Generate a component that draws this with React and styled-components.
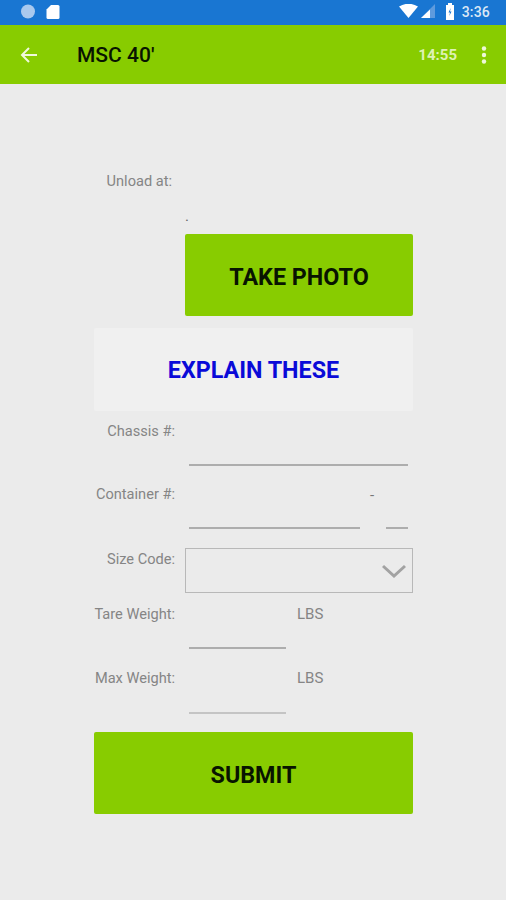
import React from 'react';
import styled, { createGlobalStyle } from 'styled-components';

const Global = createGlobalStyle`
  html, body { margin: 0; padding: 0; background: #ebebeb; }
  body { font-family: Roboto, "Liberation Sans", sans-serif; }
`;
const Screen = styled.div`
  width: 506px; height: 900px; background: #ebebeb; overflow: hidden;
  display: flex; flex-direction: column;
`;
const StatusBar = styled.div`
  height: 25px; background: #1976d2; display: flex; align-items: center;
  padding: 0 16px 2px 20px; box-sizing: border-box; color: #fff;
`;
const StatusLeft = styled.div`display: flex; align-items: center; gap: 11px; flex: 1;`;
const StatusRight = styled.div`display: flex; align-items: center;`;
const Clock = styled.span`
  font-size: 14px; font-weight: 500; color: #dbe8f6; margin-left: 7px; letter-spacing: .2px;
`;
const AppBar = styled.header`
  height: 59px; background: #88cc00; display: flex; align-items: center; box-sizing: border-box;
  padding: 0 19px 0 20px;
`;
const Back = styled.svg`width: 18px; height: 18px; display: block;`;
const Title = styled.h1`
  margin: 2px 0 0 39px; flex: 1; font-size: 21px; font-weight: 500; color: #081400; line-height: 1;
`;
const Timer = styled.span`font-size: 15px; font-weight: 700; color: #dff2b5; margin-right: 24px;`;
const Form = styled.main`
  width: 319px; margin: 0 0 0 94px; padding-top: 86px; display: flex; flex-direction: column;
`;
const Row = styled.div`
  display: grid; grid-template-columns: 91px 1fr; height: ${p => p.$h}px;
`;
const Label = styled.label`
  font-size: 14.6px; line-height: 20px; color: #858585; text-align: right; white-space: nowrap;
  padding-right: ${p => p.$inset || 10}px; margin-top: ${p => p.$top || 0}px;
`;
const Dot = styled.span`
  font-size: 15px; line-height: 14px; color: #666; margin-top: 39px; display: block;
`;
const ActionButton = styled.button`
  display: block; border: 0; border-radius: 2px; padding: ${p => p.$pad}px 0 0; cursor: pointer;
  width: 100%; height: ${p => p.$h}px; margin: ${p => p.$m || '0'};
  background: ${p => p.$bg}; color: ${p => p.$fg};
  font-family: inherit; font-size: 23.3px; font-weight: 700; line-height: 1;
  grid-column: ${p => p.$col || 'auto'};
`;
const Split = styled.div`
  display: flex; position: relative; align-items: flex-end; height: 100%; padding: 0 5px 0 4px;
  justify-content: space-between;
`;
const Field = styled.div`
  height: 2px; background: ${p => p.$c || '#adadad'};
  width: ${p => p.$w ? p.$w + 'px' : 'auto'}; flex: ${p => p.$w ? 'none' : 1};
`;
const Hyphen = styled.span`
  position: absolute; left: 185px; top: 19px; font-size: 15px; line-height: 20px; color: #777;
`;
const Select = styled.div`
  height: 45px; margin-top: 19px; box-sizing: border-box; border: 1px solid #b8b8b8; display: flex;
  align-items: center; justify-content: flex-end; padding-right: 6px;
`;
const Chevron = styled.svg`width: 24px; height: 14px; display: block;`;
const Weight = styled.div`position: relative; display: flex; align-items: flex-end; height: 100%; padding-left: 4px;`;
const Unit = styled.span`
  position: absolute; left: 112px; top: ${p => p.$top}px; font-size: 15px; line-height: 20px; color: #858585;
`;

export default function App() {
  return (
    <Screen>
      <Global />
      <StatusBar>
        <StatusLeft>
          <svg width="15" height="15" viewBox="0 0 15 15"><circle cx="8" cy="7.5" r="7" fill="#a9c9ee" /></svg>
          <svg width="14" height="16" viewBox="0 0 14 16"><path d="M5 1h7a1.500 1.500 0 0 1 1.500 1.500v11A1.500 1.500 0 0 1 12 15H2a1.500 1.500 0 0 1-1.500-1.500V5.500Z" fill="#fff" /></svg>
        </StatusLeft>
        <StatusRight>
          <svg width="20" height="15" viewBox="0 0 20 15"><path d="M0 2.500Q9.500-3 19 2.500L9.500 14Z" fill="#fff" /></svg>
          <svg width="16" height="15" viewBox="0 0 16 15" style={{ marginLeft: 1 }}>
            <path d="M15 0V14H1Z" fill="#5f9bdd" /><path d="M10 5.500V14H1Z" fill="#fff" />
          </svg>
          <svg width="10" height="17" viewBox="0 0 10 17" style={{ marginLeft: 9 }}>
            <path d="M3 0h4v2h2v15H1V2h2Z" fill="#fff" /><path d="M5.700 5 3.500 9.500H5L4.300 13 6.500 8.500H5Z" fill="#1976d2" />
          </svg>
          <Clock>3:36</Clock>
        </StatusRight>
      </StatusBar>
      <AppBar>
        <Back viewBox="0 0 18 18" fill="none" stroke="#f0f9dc" strokeWidth="2">
          <path d="M17 9H2M9 2 2 9l7 7" />
        </Back>
        <Title>MSC 40'</Title>
        <Timer>14:55</Timer>
        <svg width="6" height="18" viewBox="0 0 6 18" fill="#eef8d8">
          <circle cx="3" cy="2.500" r="2.200" /><circle cx="3" cy="9" r="2.200" /><circle cx="3" cy="15.500" r="2.200" />
        </svg>
      </AppBar>
      <Form>
        <Row $h={64}>
          <Label $inset={13} $top={1}>Unload at:</Label>
          <Dot>.</Dot>
        </Row>
        <Row $h={94}>
          <ActionButton $col="2" $h={82} $pad={5} $bg="#88cc00" $fg="#081400">TAKE PHOTO</ActionButton>
        </Row>
        <ActionButton $h={83} $pad={2} $bg="#f0f0f0" $fg="#0a0ad8">EXPLAIN THESE</ActionButton>
        <Row $h={55}>
          <Label $top={10}>Chassis #:</Label>
          <Split><Field /></Split>
        </Row>
        <Row $h={63}>
          <Label $top={18}>Container #:</Label>
          <Split>
            <Hyphen>-</Hyphen>
            <Field $w={171} />
            <Field $w={22} />
          </Split>
        </Row>
        <Row $h={64}>
          <Label $top={20}>Size Code:</Label>
          <Select>
            <Chevron viewBox="0 0 24 14" fill="none" stroke="#a2a2a2" strokeWidth="3">
              <path d="M1 2 12 12 23 2" />
            </Chevron>
          </Select>
        </Row>
        <Row $h={56}>
          <Label $top={11}>Tare Weight:</Label>
          <Weight><Unit $top={11}>LBS</Unit><Field $w={97} /></Weight>
        </Row>
        <Row $h={65}>
          <Label $top={19}>Max Weight:</Label>
          <Weight><Unit $top={19}>LBS</Unit><Field $w={97} $c="#c4c4c4" /></Weight>
        </Row>
        <ActionButton $h={82} $m="18px 0 0" $pad={5} $bg="#88cc00" $fg="#081400">SUBMIT</ActionButton>
      </Form>
    </Screen>
  );
}
